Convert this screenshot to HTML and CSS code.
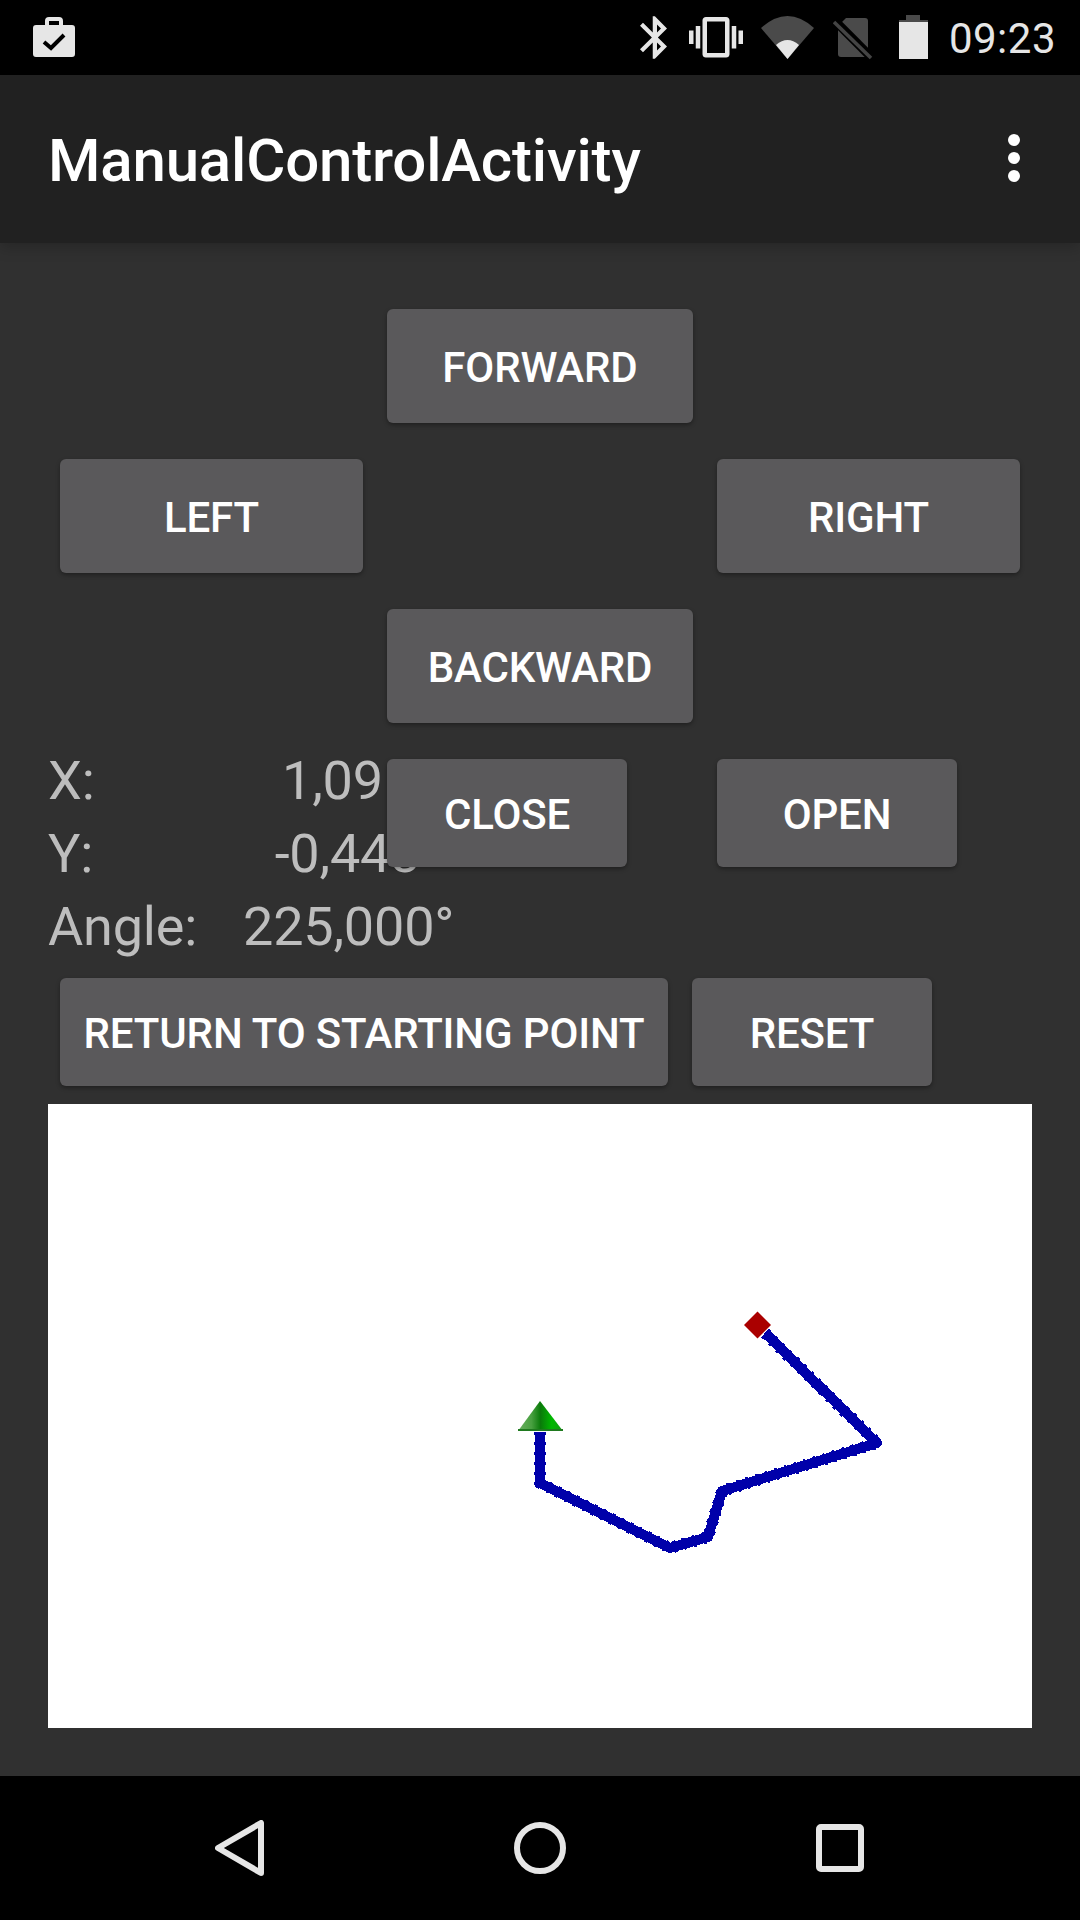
FILE: index.html
```html
<!DOCTYPE html>
<html lang="en">
<head>
<meta charset="utf-8">
<title>ManualControlActivity</title>
<link rel="stylesheet" href="styles.css">
</head>
<body>
<div class="screen">
  <header class="status">
    <svg class="bag" viewBox="0 0 42 40"><path class="ico" d="M12 8V4a4 4 0 0 1 4-4h10a4 4 0 0 1 4 4v4h9a3 3 0 0 1 3 3v26a3 3 0 0 1-3 3H3a3 3 0 0 1-3-3V11a3 3 0 0 1 3-3zM16 8h10V4H16z" fill-rule="evenodd"/><path d="M11 25l7 6 13-13" fill="none" stroke="#000" stroke-width="4"/></svg>
    <div class="status-right">
      <svg class="bt" viewBox="5 2 12.71 20"><path class="ico" d="M17.71 7.71L12 2h-1v7.59L6.41 5 5 6.41 10.59 12 5 17.59 6.41 19 11 14.41V22h1l5.71-5.71-4.3-4.29 4.3-4.29zM13 5.83l1.88 1.88L13 9.59V5.83zm1.88 10.46L13 18.17v-3.76l1.88 1.88z"/></svg>
      <svg class="vib" viewBox="0 3 24 18"><path class="ico" d="M0 15h2V9H0v6zm3 2h2V7H3v10zm19-8v6h2V9h-2zm-3 8h2V7h-2v10zM16.5 3h-9C6.67 3 6 3.67 6 4.5v15c0 .83.67 1.5 1.5 1.5h9c.83 0 1.5-.67 1.5-1.5v-15c0-.83-.67-1.5-1.5-1.5zM16 19H8V5h8v14z"/></svg>
      <svg class="wifi" viewBox="0 0 53 43"><path class="dim" d="M0 12Q26.500-12 53 12L26.500 43z"/><path class="ico" d="M15 29Q26.500 19 38 29L26.500 43z"/></svg>
      <svg class="sim" viewBox="0 0 40 44"><path class="dim" d="M13 2h19a3 3 0 0 1 3 3v33a3 3 0 0 1-3 3H8a3 3 0 0 1-3-3V10z"/><path d="M0 3L40 43" stroke="#000" stroke-width="9"/><path d="M1 6L38 42" stroke="#444" stroke-width="3.500"/></svg>
      <svg class="batt" viewBox="0 0 29 44"><path class="dim" d="M7 0h14v5h8v3H0V5h7z"/><rect class="ico" y="7" width="29" height="37"/></svg>
      <span class="time">09:23</span>
    </div>
  </header>

  <div class="appbar">
    <h1 class="title">ManualControlActivity</h1>
    <svg class="more" viewBox="0 0 12 48"><circle cx="6" cy="6" r="6"/><circle cx="6" cy="24" r="6"/><circle cx="6" cy="42" r="6"/></svg>
  </div>

  <main class="content">
    <div class="pad">
      <button class="btn forward">FORWARD</button>
      <button class="btn left">LEFT</button>
      <button class="btn right">RIGHT</button>
      <button class="btn backward">BACKWARD</button>
    </div>

    <div class="stack">
      <dl class="info">
        <dt>X:</dt><dd>1,091</dd>
        <dt>Y:</dt><dd>-0,443</dd>
        <dt>Angle:</dt><dd>225,000°</dd>
      </dl>
      <div class="claw">
        <button class="btn slim close">CLOSE</button>
        <button class="btn slim open">OPEN</button>
      </div>
    </div>

    <div class="actions">
      <button class="btn slim ret">RETURN TO STARTING POINT</button>
      <button class="btn slim reset">RESET</button>
    </div>

    <div class="canvas">
      <svg class="map" viewBox="0 0 984 624">
        <defs>
          <linearGradient id="g" gradientUnits="userSpaceOnUse" x1="470" y1="0" x2="515" y2="0">
            <stop offset="0" stop-color="#6ab060"/>
            <stop offset=".3" stop-color="#48a040"/>
            <stop offset=".5" stop-color="#0a7a0a"/>
            <stop offset=".75" stop-color="#00b800"/>
            <stop offset="1" stop-color="#149a14"/>
          </linearGradient>
        </defs>
        <polyline class="route" points="492,328 492,379 622,444 660,433 674,387 829,339 717,229"/>
        <polyline class="route route-dots" points="492,328 492,379 622,444 660,433 674,387 829,339 717,229"/>
        <path class="arrow" d="M492 297L470 327H515z" fill="url(#g)"/>
        <rect x="470" y="325" width="45" height="2" fill="#1f7a1f"/>
        <path d="M709.500 207.500L723 221 709.500 234.500 696 221z" fill="#aa0000"/>
      </svg>
    </div>
  </main>

  <nav class="nav">
    <svg class="nav-back" viewBox="0 0 49 56"><path d="M46 3V53L3 28z" /></svg>
    <svg class="nav-home" viewBox="0 0 52 52"><circle cx="26" cy="26" r="23"/></svg>
    <svg class="nav-rec" viewBox="0 0 48 48"><rect x="3" y="3" width="42" height="42" rx="2"/></svg>
  </nav>
</div>
</body>
</html>
```
FILE: styles.css
```css
* { box-sizing: border-box; }
html, body { margin: 0; padding: 0; background: #303030; }
.screen {
  width: 1080px; height: 1920px; display: flex; flex-direction: column;
  font-family: Roboto, "Noto Sans", sans-serif; overflow: hidden;
}
.ico { fill: #e6e6e6; }
.dim { fill: #4a4a4a; }

.status {
  height: 75px; background: #000; flex: none; display: flex;
  align-items: flex-start; justify-content: space-between; padding-left: 33px;
}
.status svg { display: block; flex: none; }
.bag { width: 42px; height: 40px; margin-top: 17px; }
.status-right { display: flex; align-items: flex-start; padding-right: 24px; }
.bt { width: 27px; height: 43px; margin-top: 16px; }
.vib { width: 54px; height: 40.500px; margin: 17px 0 0 22px; }
.wifi { width: 53px; height: 43px; margin: 16px 0 0 18px; }
.sim { width: 40px; height: 44px; margin: 16px 0 0 19px; }
.batt { width: 29px; height: 44px; margin: 15px 0 0 26px; }
.time { font-size: 42px; line-height: 49px; letter-spacing: .5px; color: #e6e6e6; margin: 14px 0 0 21px; }

.appbar {
  height: 168px; flex: none; background: #212121; display: flex; align-items: center;
  justify-content: space-between; padding: 0 60px 0 48px;
  position: relative; z-index: 1; box-shadow: 0 4px 14px rgba(0,0,0,.22);
}
.title { margin: 4px 0 0; font-size: 60px; font-weight: 500; letter-spacing: -.18px; color: #fff; line-height: 70px; }
.more { width: 12px; height: 48px; fill: #fff; display: block; margin-top: -3px; }

.content { flex: 1; background: #303030; padding-top: 66px; display: flex; flex-direction: column; }
.btn {
  border: 0; margin: 0; padding: 3px 0 0; background: #5a595b; color: #fff; border-radius: 6px;
  font: 500 42px/42px Roboto, "Noto Sans", sans-serif; letter-spacing: -.15px; height: 114px;
  box-shadow: 0 2px 4px rgba(0,0,0,.35); display: block;
}
.slim { height: 108px; }

.pad {
  display: grid; grid-template-columns: 303px 306px 303px; column-gap: 24px; row-gap: 36px;
  padding: 0 60px;
}
.forward { grid-area: 1 / 2; }
.left { grid-area: 2 / 1; }
.right { grid-area: 2 / 3; }
.backward { grid-area: 3 / 2; }

.stack { display: grid; margin-top: 20px; }
.stack > * { grid-area: 1 / 1; }
.info {
  margin: 0; padding: 1px 0 0 48px; display: grid; grid-template-columns: 195px 209px;
  grid-auto-rows: 73px; justify-content: start; align-items: center;
  font-size: 54px; letter-spacing: -.2px; color: #bdbdbd;
}
.info dt, .info dd { margin: 0; }
.info dd { text-align: center; white-space: nowrap; }
.claw {
  margin-top: 16px; align-self: start; display: grid;
  grid-template-columns: 240px 240px; column-gap: 90px; padding-left: 387px;
}
.actions { display: flex; gap: 24px; padding-left: 60px; margin-top: 15px; }
.ret { width: 608px; }
.reset { width: 240px; }

.canvas { width: 984px; height: 624px; margin: 18px 0 0 48px; background: #fff; }
.map { display: block; width: 984px; height: 624px; }
.route { fill: none; stroke: #0000aa; stroke-width: 10; stroke-linejoin: round; shape-rendering: crispEdges; }
.route-dots { stroke-width: 12; stroke-dasharray: 3 7; }

.nav { height: 144px; flex: none; background: #000; position: relative; display: flex; align-items: center; }
.nav svg { display: block; flex: none; fill: none; stroke: #e6e6e6; stroke-width: 6; stroke-linejoin: round; }
.nav-back { width: 49px; height: 56px; margin-left: 215px; }
.nav-home { width: 52px; height: 52px; margin-left: 250px; }
.nav-rec { width: 48px; height: 48px; margin-left: 250px; }
```
